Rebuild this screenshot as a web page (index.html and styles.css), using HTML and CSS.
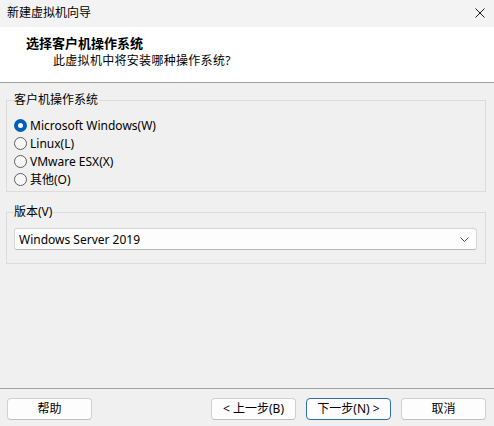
FILE: index.html
```html
<!DOCTYPE html>
<html lang="zh-CN">
<head>
<meta charset="utf-8">
<title>新建虚拟机向导</title>
<link rel="stylesheet" href="styles.css">
</head>
<body>
<div class="window">
  <div class="titlebar">
    <span class="title">新建虚拟机向导</span>
    <svg class="close" width="10" height="10" viewBox="0 0 10 10"><path d="M0.5 0.5 L9.5 9.5 M9.5 0.5 L0.5 9.5" stroke="#1a1a1a" stroke-width="1" fill="none"/></svg>
  </div>
  <div class="header">
    <div class="h-title">选择客户机操作系统</div>
    <div class="h-sub">此虚拟机中将安装哪种操作系统?</div>
  </div>
  <div class="content">
    <fieldset class="group group-os">
      <legend>客户机操作系统</legend>
      <div class="radio-row"><span class="radio checked"></span><span>Microsoft Windows(W)</span></div>
      <div class="radio-row"><span class="radio"></span><span>Linux(L)</span></div>
      <div class="radio-row"><span class="radio"></span><span>VMware ESX(X)</span></div>
      <div class="radio-row"><span class="radio"></span><span>其他(O)</span></div>
    </fieldset>
    <fieldset class="group group-ver">
      <legend>版本(V)</legend>
      <div class="select">
        <span>Windows Server 2019</span>
        <svg class="chev" width="9" height="5" viewBox="0 0 9 5"><path d="M0.5 0.5 L4.5 4.5 L8.5 0.5" stroke="#444" stroke-width="1" fill="none"/></svg>
      </div>
    </fieldset>
  </div>
  <div class="footer">
    <button class="btn">帮助</button>
    <div class="nav">
      <button class="btn">&lt; 上一步(B)</button>
      <button class="btn default">下一步(N) &gt;</button>
      <button class="btn">取消</button>
    </div>
  </div>
</div>
</body>
</html>
```
FILE: styles.css
```css
* { box-sizing: border-box; }
html, body { margin: 0; padding: 0; }
body {
  font-family: "Noto Sans", "Noto Sans CJK SC", sans-serif;
  font-size: 12px;
  color: #000;
  background: #f0f0f0;
}
.window {
  width: 494px;
  height: 426px;
  display: flex;
  flex-direction: column;
  background: #f0f0f0;
}
.titlebar {
  height: 27px;
  background: #f3f3f3;
  display: flex;
  align-items: center;
  justify-content: space-between;
  padding: 0 9px 2px 7px;
}
.title { line-height: 16px; }
.header {
  height: 56px;
  background: #fff;
  border-bottom: 1px solid #a0a0a0;
  padding: 8px 0 0 26px;
}
.h-title { font-weight: bold; font-size: 13px; line-height: 16px; }
.h-sub { line-height: 16px; margin: 2px 0 0 27px; letter-spacing: 0.3px; }
.content {
  display: flex;
  flex-direction: column;
}
.group {
  margin: 0 8px 0 6px;
  border: 1px solid #dcdcdc;
  padding: 0 8px 0 7px;
  min-width: 0;
}
.group legend {
  padding: 0 1px 0 0;
  line-height: 16px;
}
.group-os {
  margin-top: 9px;
  padding-top: 8px;
  padding-bottom: 3px;
}
.group-ver {
  margin-top: 12px;
  padding-top: 8px;
  padding-bottom: 13px;
}
.radio-row {
  display: flex;
  align-items: center;
  height: 18px;
  gap: 3px;
}
.radio {
  width: 13px;
  height: 13px;
  border-radius: 50%;
  border: 1px solid #5f5f5f;
  background: #f7f7f7;
  flex: none;
}
.radio.checked {
  border: 4px solid #005fb8;
  background: #fff;
}
.select {
  height: 22px;
  background: #fdfdfd;
  border: 1px solid #d6d6d6;
  border-bottom-color: #b8b8b8;
  border-radius: 3px;
  display: flex;
  align-items: center;
  justify-content: space-between;
  padding: 0 7px 0 4px;
}
.footer {
  margin-top: auto;
  border-top: 1px solid #a0a0a0;
  display: flex;
  justify-content: space-between;
  padding: 9px 8px 6px 7px;
}
.nav { display: flex; gap: 10px; }
.btn {
  font: inherit;
  color: #000;
  width: 85px;
  height: 22px;
  background: #fdfdfd;
  border: 1px solid #d0d0d0;
  border-bottom-color: #c0c0c0;
  border-radius: 4px;
  padding: 0;
  line-height: 18px;
}
.btn.default {
  border: 1px solid #2f6fb0;
}
```
